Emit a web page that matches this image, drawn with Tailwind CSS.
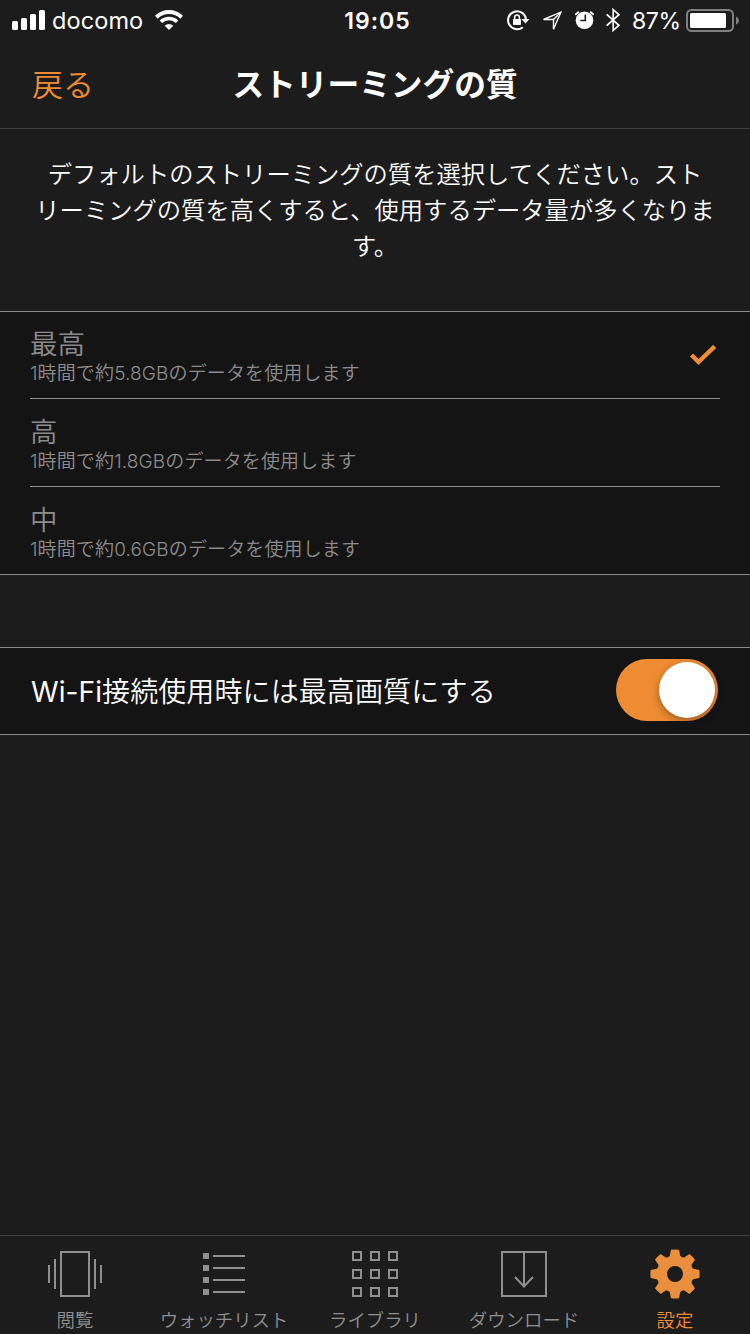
<!DOCTYPE html>
<html lang="ja">
<head>
  <meta charset="UTF-8" />
  <meta name="viewport" content="width=device-width, initial-scale=1.0"/>
  <title>ストリーミングの質</title>
  <script src="https://cdn.jsdelivr.net/npm/@tailwindcss/browser@4"></script>
</head>
<body class="bg-[#1c1c1c] text-white font-['Inter','Noto_Sans_CJK_JP',sans-serif]">
  <div class="flex flex-col w-[750px] h-[1334px] overflow-hidden whitespace-nowrap">

    <!-- Status bar -->
    <div class="grid grid-cols-[1fr_auto_1fr] items-center h-10 shrink-0 pl-3 pr-[11px]">
      <div class="flex items-center h-10">
        <svg class="w-[34px] h-10" viewBox="12 0 34 40" fill="#fff">
          <rect x="12" y="21" width="6" height="9" rx="1.5"/>
          <rect x="21" y="18" width="6" height="12" rx="1.5"/>
          <rect x="30" y="14" width="6" height="16" rx="1.5"/>
          <rect x="39" y="10" width="6" height="20" rx="1.5"/>
        </svg>
        <span class="ml-1.5 w-[91px] pt-0.5 text-[23.500px] leading-[38px] tracking-[0.100px] font-['Inter']">docomo</span>
        <svg class="ml-3 w-7 h-10" viewBox="155 0 28 40" fill="none" stroke="#fff">
          <path d="M156.300 17.200a18.300 18.300 0 0 1 25.400 0" stroke-width="4"/>
          <path d="M160.900 21.800a11.700 11.700 0 0 1 16.200 0" stroke-width="3.600"/>
          <path d="M164.700 25.700a6.200 6.200 0 0 1 8.600 0L169 30z" fill="#fff" stroke="none"/>
        </svg>
      </div>
      <span class="pt-0.5 pl-1 text-[23px] leading-[38px] font-semibold tracking-[1px] font-['Inter']">19:05</span>
      <div class="flex items-center justify-end h-10">
        <svg class="w-6 h-10" viewBox="506 0 24 40" fill="none" stroke="#fff" stroke-width="2">
          <path d="M526 19a9 9 0 1 0-3.200 8.200"/>
          <path d="M521.500 19h8l-4 4.500z" fill="#fff" stroke="none"/>
          <rect x="513" y="19" width="8" height="6" rx=".8" fill="#fff" stroke="none"/>
          <path d="M514.600 20v-2.500a2.400 2.400 0 0 1 4.800 0V20" stroke-width="1.500"/>
        </svg>
        <svg class="ml-3 w-5 h-10" viewBox="542 0 20 40" fill="none" stroke="#fff" stroke-width="1.400">
          <path d="M543.500 19.500L560.800 12.200l-7.300 17v-9.700z"/>
          <path d="M553.500 19.500L560.800 12.200"/>
        </svg>
        <svg class="ml-3 w-[21px] h-10" viewBox="574 0 21 40" fill="none">
          <circle cx="584.500" cy="20.200" r="8.800" fill="#fff"/>
          <path d="M585.300 14.500v6h-5" stroke="#1c1c1c" stroke-width="1.600"/>
          <path d="M575.300 14.700l3.600-3M593.700 14.700l-3.600-3" stroke="#fff" stroke-width="1.800"/>
        </svg>
        <svg class="ml-[10px] w-4 h-10" viewBox="605 0 16 40" fill="none" stroke="#fff" stroke-width="1.700">
          <path d="M606.700 14.300l12.200 11-5.700 5V9.700l5.700 5-12.200 11"/>
        </svg>
        <span class="ml-[11px] w-[48px] pt-0.5 text-[23px] leading-[38px] tracking-[-0.400px] font-['Inter']">87%</span>
        <svg class="ml-[6px] w-[53px] h-10" viewBox="686 0 53 40">
          <rect x="687" y="10" width="46" height="21" rx="4.500" fill="none" stroke="#808080" stroke-width="2"/>
          <rect x="690" y="13" width="36" height="15" rx="1.500" fill="#fff"/>
          <path d="M736 16.500c3.800 1.500 3.800 6.500 0 8z" fill="#808080"/>
        </svg>
      </div>
    </div>

    <!-- Navigation -->
    <div class="grid grid-cols-[1fr_auto_1fr] h-[89px] shrink-0 border-b border-[#414141] leading-[90px]">
      <span class="pl-8 text-[31px] text-[#ef8c33] font-[350]">戻る</span>
      <h1 class="text-[31.700px] font-semibold">ストリーミングの質</h1>
    </div>

    <p class="h-[182px] shrink-0 pt-[27px] text-center text-[24.300px] leading-9 font-[350]">デフォルトのストリーミングの質を選択してください。スト<br>リーミングの質を高くすると、使用するデータ量が多くなりま<br>す。</p>

    <!-- Quality list -->
    <div class="h-[264px] shrink-0 px-[30px] border-y border-[#8c8c8c] bg-[#141414] text-[#8c8c8c] font-[350]">
      <div class="flex items-center justify-between h-[87px] border-b border-[#8c8c8c]">
        <div class="pt-[5px]">
          <div class="text-[27.500px] leading-8">最高</div>
          <div class="text-[19px] leading-7 tracking-[0.130px]">1時間で約5.8GBのデータを使用します</div>
        </div>
        <svg class="mr-[3px] w-7 h-6" viewBox="689 343 28 24" fill="none" stroke="#ef8c33" stroke-width="4.400">
          <path d="M691.500 355l7 7 16.200-15.600"/>
        </svg>
      </div>
      <div class="flex items-center h-[88px] border-b border-[#8c8c8c]">
        <div class="pt-[6px]">
          <div class="text-[27.500px] leading-8">高</div>
          <div class="text-[19px] leading-7 tracking-[0.130px]">1時間で約1.8GBのデータを使用します</div>
        </div>
      </div>
      <div class="flex items-center h-[87px]">
        <div class="pt-[6px]">
          <div class="text-[27.500px] leading-8">中</div>
          <div class="text-[19px] leading-7 tracking-[0.130px]">1時間で約0.6GBのデータを使用します</div>
        </div>
      </div>
    </div>

    <!-- Wi-Fi switch -->
    <div class="flex items-center justify-between mt-[72px] h-[88px] shrink-0 pl-[31px] pr-8 border-y border-[#8c8c8c] bg-[#141414]">
      <span class="pt-[2px] text-[28px] leading-[80px] tracking-[0.100px] font-[350]"><span class="font-normal">Wi-Fi</span>接続使用時には最高画質にする</span>
      <div class="flex items-center justify-end w-[102px] h-[62px] pr-[3px] mb-[2px] rounded-full bg-[#ef8c33]">
        <div class="size-14 rounded-full bg-white shadow-[0_3px_8px_rgba(0,0,0,0.35)]"></div>
      </div>
    </div>

    <!-- Tab bar -->
    <div class="grid grid-cols-5 mt-auto h-[99px] shrink-0 border-t border-[#414141] text-[#8f8f8f] text-[18.400px] leading-7 font-[350]">
      <div class="flex flex-col items-center pt-[10px]">
        <svg class="w-14 h-14 mb-1" viewBox="47 1246 56 56" fill="none" stroke="#8f8f8f" stroke-width="2">
          <rect x="61" y="1252" width="28" height="44"/>
          <path d="M49 1265v18M55 1259v30M95 1259v30M101 1265v18"/>
        </svg>
        <span>閲覧</span>
      </div>
      <div class="flex flex-col items-center pt-[10px] pr-[2px]">
        <svg class="w-14 h-14 mb-1" viewBox="196 1246 56 56" fill="#8f8f8f">
          <path d="M203 1253h6v6h-6zM203 1265h6v6h-6zM203 1277h6v6h-6zM203 1289h6v6h-6z"/>
          <path d="M213 1255h32v2h-32zM213 1267h32v2h-32zM213 1279h32v2h-32zM213 1291h32v2h-32z"/>
        </svg>
        <span>ウォッチリスト</span>
      </div>
      <div class="flex flex-col items-center pt-[10px]">
        <svg class="w-14 h-14 mb-1" viewBox="347 1246 56 56" fill="none" stroke="#8f8f8f" stroke-width="2">
          <path d="M353 1252h8v8h-8zM371 1252h8v8h-8zM389 1252h8v8h-8z"/>
          <path d="M353 1270h8v8h-8zM371 1270h8v8h-8zM389 1270h8v8h-8z"/>
          <path d="M353 1288h8v8h-8zM371 1288h8v8h-8zM389 1288h8v8h-8z"/>
        </svg>
        <span>ライブラリ</span>
      </div>
      <div class="flex flex-col items-center pt-[10px]">
        <svg class="w-14 h-14 mb-1" viewBox="497 1246 56 56" fill="none" stroke="#8f8f8f" stroke-width="2">
          <rect x="502" y="1252" width="44" height="44"/>
          <path d="M524 1252v35M515 1277l9 9.500 9-9.500"/>
        </svg>
        <span class="pr-[2px]">ダウンロード</span>
      </div>
      <div class="flex flex-col items-center pt-[10px] text-[#ef8c33]">
        <svg class="w-14 h-14 mb-1" viewBox="-28 -28 56 56">
          <defs><path id="tooth" d="M-4-24.300q4-.6 8 0l1.200 6 3.300 3h-17l3.300-3z"/></defs>
          <g fill="#e98f3e">
            <use href="#tooth"/>
            <use href="#tooth" transform="rotate(45)"/>
            <use href="#tooth" transform="rotate(90)"/>
            <use href="#tooth" transform="rotate(135)"/>
            <use href="#tooth" transform="rotate(180)"/>
            <use href="#tooth" transform="rotate(225)"/>
            <use href="#tooth" transform="rotate(270)"/>
            <use href="#tooth" transform="rotate(315)"/>
          </g>
          <circle r="12.500" fill="none" stroke="#e98f3e" stroke-width="9"/>
        </svg>
        <span>設定</span>
      </div>
    </div>
  </div>
</body>
</html>
